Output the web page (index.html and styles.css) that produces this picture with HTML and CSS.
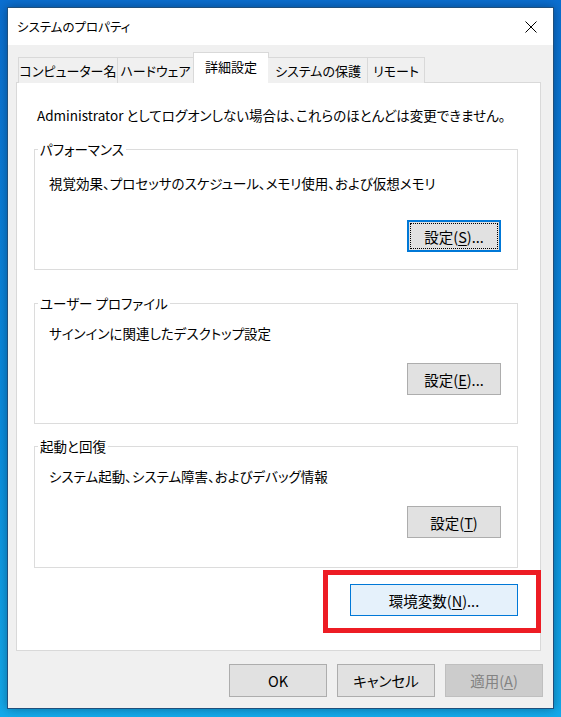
FILE: index.html
```html
<!DOCTYPE html>
<html lang="ja">
<head>
    <meta charset="UTF-8">
    <title>システムのプロパティ</title>
    <link rel="stylesheet" href="styles.css">
</head>
<body>

    <!-- Dialog window -->
    <div class="window">
        <div class="titlebar">
            <span class="title">システムのプロパティ</span>
            <svg class="close" width="12" height="12" viewBox="0 0 12 12">
                <path d="M0.5 0.5 L11.5 11.5 M11.5 0.5 L0.5 11.5" stroke="#000" stroke-width="1" fill="none"/>
            </svg>
        </div>

        <div class="content">
            <!-- Tabs -->
            <div class="tabs">
                <div class="tab tab-name">コンピューター名</div>
                <div class="tab tab-hw">ハードウェア</div>
                <div class="tab tab-adv selected">詳細設定</div>
                <div class="tab tab-prot">システムの保護</div>
                <div class="tab tab-remote">リモート</div>
            </div>

            <!-- Tab page -->
            <div class="panel">
                <p class="note">Administrator としてログオンしない場合は、これらのほとんどは変更できません。</p>

                <fieldset class="group group-perf">
                    <legend>パフォーマンス</legend>
                    <p class="desc">視覚効果、プロセッサのスケジュール、メモリ使用、および仮想メモリ</p>
                    <div class="group-actions">
                        <button class="btn focused"><span class="focus-ring">設定(<u>S</u>)...</span></button>
                    </div>
                </fieldset>

                <fieldset class="group group-profile">
                    <legend>ユーザー プロファイル</legend>
                    <p class="desc">サインインに関連したデスクトップ設定</p>
                    <div class="group-actions">
                        <button class="btn">設定(<u>E</u>)...</button>
                    </div>
                </fieldset>

                <fieldset class="group group-startup">
                    <legend>起動と回復</legend>
                    <p class="desc">システム起動、システム障害、およびデバッグ情報</p>
                    <div class="group-actions">
                        <button class="btn">設定(<u>T</u>)</button>
                    </div>
                </fieldset>

                <div class="env-row">
                    <button class="btn env">環境変数(<u>N</u>)...</button>
                </div>

                <!-- Red highlight annotation -->
                <div class="highlight"></div>
            </div>

            <!-- Dialog buttons -->
            <div class="dialog-buttons">
                <button class="btn wide">OK</button>
                <button class="btn wide">キャンセル</button>
                <button class="btn wide" disabled>適用(<u>A</u>)</button>
            </div>
        </div>
    </div>

</body>
</html>
```

FILE: styles.css
```css
body {
    margin: 0;
    min-height: 717px;
    background: linear-gradient(to bottom, #0b6fd1 0%, #0a8ee0 60%, #14aaeb 100%);
    font-family: "Noto Sans CJK JP", "Noto Sans", sans-serif;
    font-size: 13.5px;
    font-feature-settings: "palt";
    color: #000;
    overflow: hidden;
}

.window {
    margin: 7px 0 0 7px;
    width: 547px;
    height: 702px;
    box-sizing: border-box;
    border: 1px solid #1f4f7c;
    background-color: #f0f0f0;
    display: flex;
    flex-direction: column;
    box-shadow: 0 0 10px rgba(0, 0, 0, 0.35);
}

.titlebar {
    height: 37px;
    flex: none;
    background-color: #fff;
    display: flex;
    align-items: center;
    justify-content: space-between;
    padding: 0 16px 0 9px;
}

.title {
    font-size: 12.5px;
    line-height: 18px;
}

.close {
    display: block;
}

.content {
    padding: 8px 12px 0 8px;
}

.tabs {
    display: flex;
    align-items: flex-end;
    height: 30px;
    padding-left: 2px;
    margin-bottom: -1px;
    position: relative;
    z-index: 1;
    font-size: 13px;
}

.tab {
    height: 25px;
    line-height: 25px;
    box-sizing: content-box;
    text-align: center;
    white-space: nowrap;
    border: 1px solid #d9d9d9;
    border-bottom: none;
    border-right: none;
    background-color: #f0f0f0;
}

.tab-name { width: 98px; }
.tab-hw { width: 75px; }
.tab-adv { width: 74px; }
.tab-prot { width: 98px; }
.tab-remote { width: 56px; }

.tab:last-child {
    border-right: 1px solid #d9d9d9;
}

.tab.selected {
    height: 30px;
    line-height: 28px;
    background-color: #fff;
    border-right: 1px solid #d9d9d9;
    margin-right: -1px;
}

.tab.selected + .tab {
    border-left: none;
    padding-left: 1px;
}

.panel {
    position: relative;
    height: 569px;
    box-sizing: border-box;
    background-color: #fff;
    border: 1px solid #d9d9d9;
    padding: 0 22px 0 17px;
}

.note {
    margin: 23px 0 0 3px;
    line-height: 18px;
    white-space: nowrap;
}

.group {
    margin: 0;
    border: 1px solid #dcdcdc;
    padding: 0 16px 0 14px;
}

.group legend {
    padding: 0 2px;
    margin-left: -11px;
    line-height: 18px;
}

.group-perf {
    margin-top: 16px;
    padding-top: 16px;
    padding-bottom: 17px;
}

.group-profile {
    margin-top: 24px;
    padding-top: 12px;
    padding-bottom: 28px;
}

.group-startup {
    margin-top: 13px;
    padding-top: 12px;
    padding-bottom: 29px;
}

.desc {
    margin: 0;
    line-height: 18px;
    white-space: nowrap;
}

.group-actions {
    display: flex;
    justify-content: flex-end;
    margin-top: 28px;
}

.group-profile .group-actions,
.group-startup .group-actions {
    margin-top: 21px;
}

.btn {
    font-family: inherit;
    font-size: 14.5px;
    font-feature-settings: "palt";
    color: #000;
    background-color: #e1e1e1;
    border: 1px solid #adadad;
    border-radius: 0;
    width: 94px;
    height: 32px;
    padding: 0;
}

.btn u {
    text-decoration-thickness: 1px;
    text-underline-offset: 2px;
}

.btn.focused {
    border: 2px solid #0078d7;
    padding: 1px;
}

.focus-ring {
    display: flex;
    align-items: center;
    justify-content: center;
    height: 100%;
    box-sizing: border-box;
    border: 1px dotted #000;
}

.env-row {
    display: flex;
    justify-content: flex-end;
    margin-top: 16px;
}

.btn.env {
    width: 168px;
    background-color: #e5f1fb;
    border-color: #0078d7;
}

.highlight {
    position: absolute;
    left: 306px;
    top: 487px;
    width: 218px;
    height: 63px;
    box-sizing: border-box;
    border: 5px solid #ed1c24;
}

.dialog-buttons {
    display: flex;
    justify-content: flex-end;
    gap: 10px;
    margin: 13px -2px 0 0;
}

.btn.wide {
    width: 98px;
    height: 33px;
}

.btn:disabled {
    background-color: #cccccc;
    border-color: #bfbfbf;
    color: #838383;
}
```
